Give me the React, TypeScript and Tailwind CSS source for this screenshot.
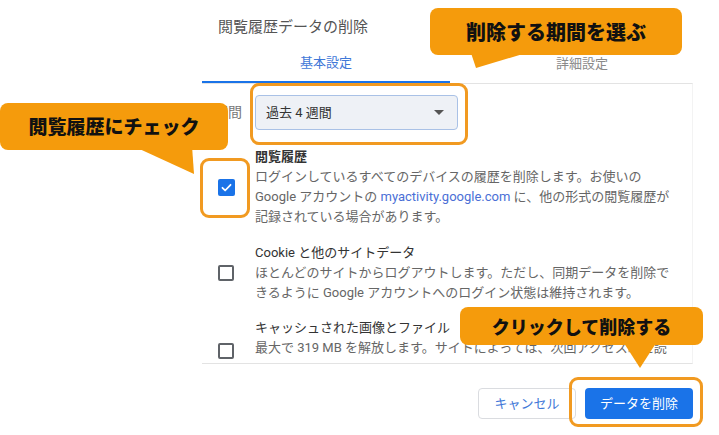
import React from "react";

const FONT = { fontFamily: "Roboto, 'Noto Sans CJK JP', sans-serif" };
const CALLOUT_FONT = { fontFamily: "'Noto Sans CJK JP', sans-serif" };

function Checked() {
  return (
    <div className="w-[17px] h-[17px] rounded-[2px] bg-[#1a73e8] flex items-center justify-center">
      <svg width="13" height="13" viewBox="0 0 24 24">
        <path d="M4.5 12.5l5 5L19.5 7" fill="none" stroke="#fff" strokeWidth="3.2" strokeLinecap="round" strokeLinejoin="round" />
      </svg>
    </div>
  );
}

function Unchecked() {
  return <div className="w-[16px] h-[16px] rounded-[2px] border-2 border-[#5f6368]" />;
}

function Row({ checked, title, lines, bold, mt, lastClass }: { checked: boolean; title: string; lines: React.ReactNode[]; bold?: boolean; mt: string; lastClass?: string }) {
  return (
    <div className={`flex items-center ${mt}`}>
      <div className="w-[53px] pl-[16px] flex items-center">{checked ? <Checked /> : <Unchecked />}</div>
      <div className="flex flex-col text-[13px] leading-[20px] whitespace-nowrap">
        <div className={`text-[#333] ${bold ? "font-semibold" : ""}`}>{title}</div>
        {lines.map((l, i) => (
          <div key={i} className={`text-[#666] ${i === lines.length - 1 && lastClass ? lastClass : ""}`}>{l}</div>
        ))}
      </div>
    </div>
  );
}

export default function App() {
  return (
    <div className="relative w-[719px] h-[435px] bg-white overflow-hidden" style={FONT}>
      <div className="ml-[202px] w-[491px] flex flex-col">
        <div className="h-[44px] pt-[17px] pl-[16px] text-[15px] leading-[20px] text-[#555]">閲覧履歴データの削除</div>
        <div className="flex h-[39px] w-[512px]">
          <div className="w-[248px] flex items-center justify-center text-[13px] text-[#3f78d8] border-b-2 border-[#1a73e8]">基本設定</div>
          <div className="w-[264px] flex items-center justify-center text-[13px] text-[#8a8a8a]">詳細設定</div>
        </div>
        <div className="h-[281px] border-t border-b border-r border-t-[#e3e3e3] border-b-[#e3e3e3] border-r-[#f3f3f3] overflow-hidden">
          <div className="flex items-center mt-[11px] pl-[12px]">
            <div className="w-[41px] text-[14px] text-[#777]">期間</div>
            <div className="w-[203px] h-[35px] rounded-[4px] border border-[#a9c1e6] bg-[#eef1f6] flex items-center justify-between pl-[10px] pr-[13px]">
              <span className="text-[13px] text-[#333]">過去 4 週間</span>
              <svg width="10" height="6" viewBox="0 0 10 6"><path d="M0 0h10L5 5z" fill="#555" /></svg>
            </div>
          </div>
          <Row
            checked
            bold
            mt="mt-[17px]"
            title="閲覧履歴"
            lines={[
              "ログインしているすべてのデバイスの履歴を削除します。お使いの",
              <span>Google アカウントの <span className="text-[#4a6fd6]">myactivity.google.com</span> に、他の形式の閲覧履歴が</span>,
              "記録されている場合があります。",
            ]}
          />
          <Row
            checked={false}
            mt="mt-[16px]"
            title="Cookie と他のサイトデータ"
            lines={[
              "ほとんどのサイトからログアウトします。ただし、同期データを削除で",
              "きるように Google アカウントへのログイン状態は維持されます。",
            ]}
          />
          <Row
            checked={false}
            mt="mt-[15px]"
            title="キャッシュされた画像とファイル"
            lastClass="mt-[5px]"
            lines={[
              "最大で 319 MB を解放します。サイトによっては、次回アクセス時に読",
              "み込みが遅くなる可能性があります。",
            ]}
          />
        </div>
        <div className="flex justify-end gap-[9px] pt-[24px]">
          <div className="w-[98px] h-[31px] rounded-[4px] border border-[#dadce0] flex items-center justify-center text-[13px] text-[#3f78d8]">キャンセル</div>
          <div className="w-[108px] h-[31px] rounded-[4px] bg-[#1a73e8] flex items-center justify-center text-[13px] text-white">データを削除</div>
        </div>
      </div>

      {/* highlight frames */}
      <div className="absolute left-[250px] top-[83px] w-[218px] h-[62px] rounded-[9px] border-[3px] border-[#f19a21]" />
      <div className="absolute left-[200px] top-[158px] w-[50px] h-[60px] rounded-[9px] border-[3px] border-[#f19a21]" />
      <div className="absolute left-[569px] top-[377px] w-[134px] h-[50px] rounded-[9px] border-[3px] border-[#f19a21]" />

      {/* callout tails */}
      <svg className="absolute left-0 top-0" width="719" height="435" viewBox="0 0 719 435">
        <polygon points="470,50 536,50 476,68" fill="#f59b0c" />
        <polygon points="133,146 192,146 194,174" fill="#f59b0c" />
        <polygon points="622,340 658,340 640,368" fill="#f59b0c" />
      </svg>
      <div className="absolute left-[430px] top-[8px] w-[252px] h-[47px] rounded-[8px] bg-[#f59b0c] flex items-center justify-center text-[20px] font-black text-[#111]" style={CALLOUT_FONT}>
        削除する期間を選ぶ
      </div>
      <div className="absolute left-[0px] top-[103px] w-[228px] h-[47px] rounded-[8px] bg-[#f59b0c] flex items-center justify-center text-[19px] font-black text-[#111]" style={CALLOUT_FONT}>
        閲覧履歴にチェック
      </div>
      <div className="absolute left-[460px] top-[307px] w-[243px] h-[38px] rounded-[8px] bg-[#f59b0c] flex items-center justify-center text-[18px] font-black text-[#111]" style={CALLOUT_FONT}>
        クリックして削除する
      </div>
    </div>
  );
}
